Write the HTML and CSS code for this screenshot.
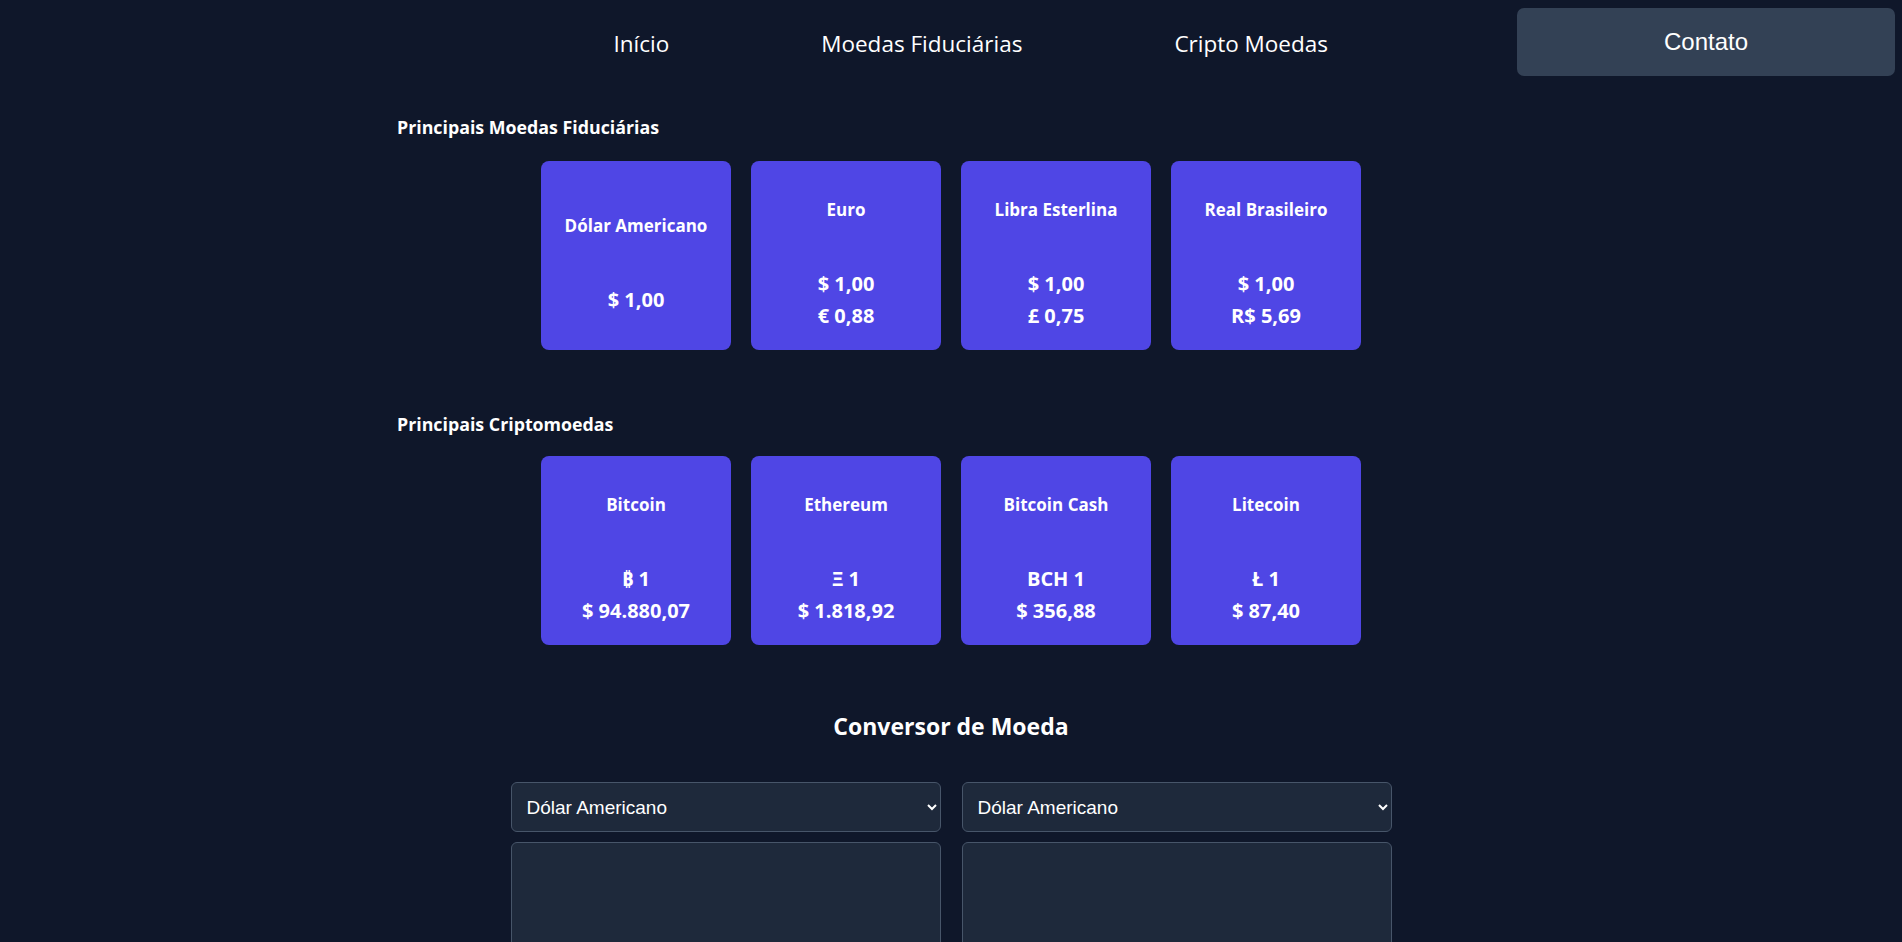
FILE: index.html
```html
<!DOCTYPE html>
<html lang="pt-BR">
<head>
<meta charset="utf-8">
<title>Conversor de Moedas</title>
<link rel="stylesheet" href="styles.css">
</head>
<body>
<header class="topbar">
  <nav class="menu">
    <a class="menu-link" href="#">Início</a>
    <a class="menu-link" href="#">Moedas Fiduciárias</a>
    <a class="menu-link" href="#">Cripto Moedas</a>
  </nav>
  <button class="contact-btn" type="button">Contato</button>
</header>

<main class="container">
  <section class="group group-fiat">
    <h2 class="group-title">Principais Moedas Fiduciárias</h2>
    <div class="cards">
      <div class="card">
        <h3 class="card-title">Dólar Americano</h3>
        <div class="card-values"><p class="value">$ 1,00</p></div>
      </div>
      <div class="card">
        <h3 class="card-title">Euro</h3>
        <div class="card-values"><p class="value">$ 1,00</p><p class="value">€ 0,88</p></div>
      </div>
      <div class="card">
        <h3 class="card-title">Libra Esterlina</h3>
        <div class="card-values"><p class="value">$ 1,00</p><p class="value">£ 0,75</p></div>
      </div>
      <div class="card">
        <h3 class="card-title">Real Brasileiro</h3>
        <div class="card-values"><p class="value">$ 1,00</p><p class="value">R$ 5,69</p></div>
      </div>
    </div>
  </section>

  <section class="group group-crypto">
    <h2 class="group-title">Principais Criptomoedas</h2>
    <div class="cards">
      <div class="card">
        <h3 class="card-title">Bitcoin</h3>
        <div class="card-values"><p class="value">₿ 1</p><p class="value">$ 94.880,07</p></div>
      </div>
      <div class="card">
        <h3 class="card-title">Ethereum</h3>
        <div class="card-values"><p class="value">Ξ 1</p><p class="value">$ 1.818,92</p></div>
      </div>
      <div class="card">
        <h3 class="card-title">Bitcoin Cash</h3>
        <div class="card-values"><p class="value">BCH 1</p><p class="value">$ 356,88</p></div>
      </div>
      <div class="card">
        <h3 class="card-title">Litecoin</h3>
        <div class="card-values"><p class="value">Ł 1</p><p class="value">$ 87,40</p></div>
      </div>
    </div>
  </section>

  <section class="converter">
    <h2 class="converter-title">Conversor de Moeda</h2>
    <div class="converter-grid">
      <select class="field-select">
        <option>Dólar Americano</option>
        <option>Euro</option>
        <option>Libra Esterlina</option>
        <option>Real Brasileiro</option>
      </select>
      <select class="field-select">
        <option>Dólar Americano</option>
        <option>Euro</option>
        <option>Libra Esterlina</option>
        <option>Real Brasileiro</option>
      </select>
      <textarea class="field-area"></textarea>
      <textarea class="field-area"></textarea>
    </div>
  </section>
</main>
</body>
</html>
```

FILE: styles.css
```css
* { box-sizing: border-box; }

body {
  margin: 0;
  background: #0f172a;
  color: #ffffff;
  font-family: "Open Sans", "Noto Sans", "DejaVu Sans", sans-serif;
}

.topbar {
  display: flex;
  justify-content: flex-end;
  align-items: center;
  padding: 8px 7px 0 0;
}

.menu {
  display: flex;
  gap: 152px;
  padding-top: 3px;
}

.menu-link {
  color: #ffffff;
  text-decoration: none;
  font-size: 22.5px;
}

.contact-btn {
  margin-left: 189px;
  width: 378px;
  height: 68px;
  border: none;
  border-radius: 7px;
  background: #334155;
  color: #ffffff;
  font-family: "Liberation Sans", Arial, sans-serif;
  font-size: 24px;
}

.container {
  width: 1108px;
  margin: 0 auto;
}

.group-fiat { padding-top: 39px; }
.group-crypto { padding-top: 62px; }

.group-title {
  margin: 0 0 22px;
  font-size: 17.8px;
  line-height: 24px;
  font-weight: 700;
}

.group-crypto .group-title { margin-bottom: 20px; }

.cards {
  display: flex;
  justify-content: center;
  gap: 20px;
}

.card {
  width: 190px;
  height: 189px;
  padding-top: 19px;
  border-radius: 8px;
  background: #4f46e5;
  display: flex;
  flex-direction: column;
  justify-content: center;
  text-align: center;
}

.card-title {
  margin: 0 0 46px;
  font-size: 17px;
  line-height: 24px;
  font-weight: 700;
}

.value {
  margin: 0;
  font-size: 20px;
  line-height: 32px;
  font-weight: 700;
}

.converter {
  padding-top: 65px;
  padding-bottom: 40px;
}

.converter-title {
  margin: 0 0 40px;
  text-align: center;
  font-size: 23px;
  line-height: 32px;
  font-weight: 700;
}

.converter-grid {
  width: 881px;
  margin: 0 auto;
  display: grid;
  grid-template-columns: 1fr 1fr;
  column-gap: 21px;
  row-gap: 10px;
}

.field-select,
.field-area {
  width: 100%;
  background: #1e293b;
  border: 1px solid #475569;
  border-radius: 6px;
  color: #ffffff;
  font-family: "Liberation Sans", Arial, sans-serif;
  font-size: 19px;
}

.field-select {
  height: 50px;
  padding: 0 4px 0 11px;
}

.field-area {
  height: 130px;
  resize: none;
  padding: 10px 14px;
}
```
